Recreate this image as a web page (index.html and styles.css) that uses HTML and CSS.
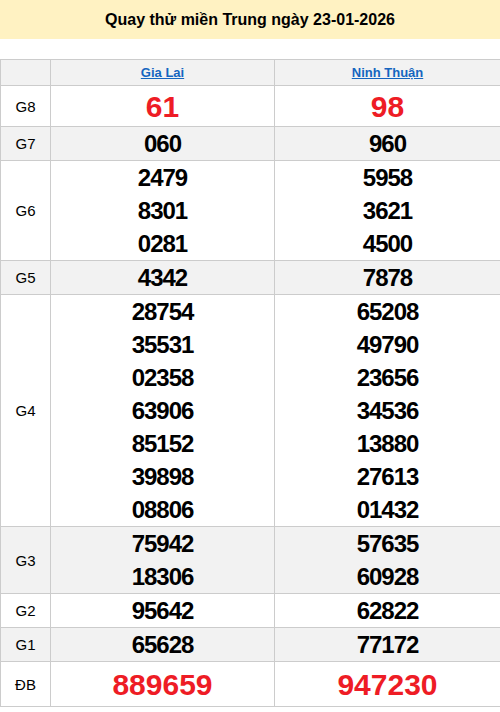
FILE: index.html
```html
<!DOCTYPE html>
<html lang="vi">
<head>
<meta charset="utf-8">
<link rel="stylesheet" href="styles.css">
</head>
<body>
<h2 class="title">Quay thử miền Trung ngày 23-01-2026</h2>
<table class="kq">
  <colgroup><col class="c-label"><col class="c-prov1"><col class="c-prov2"></colgroup>
  <thead>
    <tr class="alt hdr"><th></th><th><a href="#">Gia Lai</a></th><th><a href="#">Ninh Thuận</a></th></tr>
  </thead>
  <tbody>
    <tr class="g8"><td class="lbl">G8</td><td class="red">61</td><td class="red">98</td></tr>
    <tr class="alt"><td class="lbl">G7</td><td>060</td><td>960</td></tr>
    <tr><td class="lbl">G6</td><td><div>2479</div><div>8301</div><div>0281</div></td><td><div>5958</div><div>3621</div><div>4500</div></td></tr>
    <tr class="alt"><td class="lbl">G5</td><td>4342</td><td>7878</td></tr>
    <tr><td class="lbl">G4</td><td><div>28754</div><div>35531</div><div>02358</div><div>63906</div><div>85152</div><div>39898</div><div>08806</div></td><td><div>65208</div><div>49790</div><div>23656</div><div>34536</div><div>13880</div><div>27613</div><div>01432</div></td></tr>
    <tr class="alt"><td class="lbl">G3</td><td><div>75942</div><div>18306</div></td><td><div>57635</div><div>60928</div></td></tr>
    <tr><td class="lbl">G2</td><td>95642</td><td>62822</td></tr>
    <tr class="alt"><td class="lbl">G1</td><td>65628</td><td>77172</td></tr>
    <tr class="db"><td class="lbl">ĐB</td><td class="red">889659</td><td class="red">947230</td></tr>
  </tbody>
</table>
</body>
</html>
```
FILE: styles.css
```css
html, body { margin: 0; padding: 0; background: #fff; }
body { font-family: "Liberation Sans", Arial, sans-serif; color: #000; width: 500px; }
.title {
  margin: 0 0 20px 0;
  background: #fff2c2;
  font-size: 16px;
  font-weight: bold;
  text-align: center;
  height: 39px;
  line-height: 39px;
}
.kq {
  width: 500px;
  border-collapse: collapse;
  table-layout: fixed;
}
.c-label { width: 50px; }
.c-prov1 { width: 224px; }
.c-prov2 { width: 226px; }
.kq th, .kq td {
  border: 1px solid #cccccc;
  padding: 0;
  text-align: center;
  vertical-align: middle;
}
.kq td {
  font-size: 24px;
  font-weight: bold;
  line-height: 33px;
  letter-spacing: -1px;
}
.kq td.lbl {
  font-size: 15px;
  font-weight: normal;
  letter-spacing: 0;
}
.hdr th { height: 25px; font-size: 13px; font-weight: bold; line-height: 25px; }
.hdr a { color: #1565c0; text-decoration: underline; }
.alt { background: #f2f2f2; }
.g8 td { height: 40px; }
.db td { height: 44px; }
.kq td.red { color: #ee1c25; font-size: 30px; letter-spacing: 0; }
```
